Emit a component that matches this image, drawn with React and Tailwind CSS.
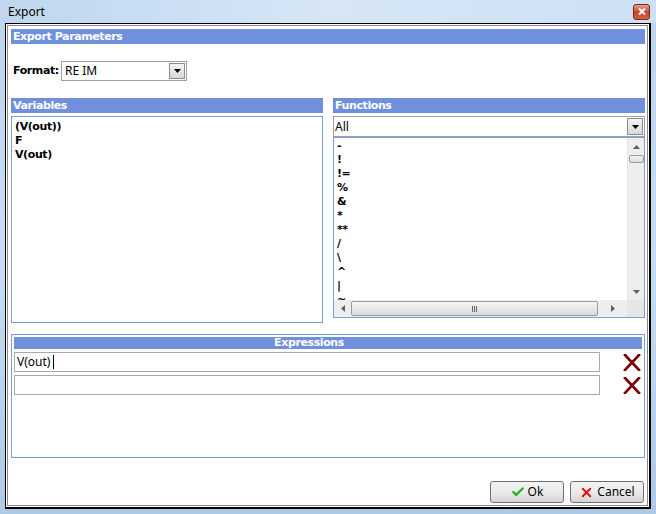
import { Check, X } from 'lucide-react'

const BOLD = "font-['DejaVu_Sans',sans-serif] font-bold text-[11px] tracking-[-0.4px]"
const REG = "font-['Noto_Sans',sans-serif] text-[12px]"

const FUNCTIONS = ['-', '!', '!=', '%', '&', '*', '**', '/', '\\', '^', '|', '~']

function Header({ children, className = '' }) {
  return (
    <div className={`h-[15px] bg-[#7090de] text-white leading-[15px] pl-[2px] ${BOLD} ${className}`}>
      {children}
    </div>
  )
}

function DropButton({ className = '' }) {
  return (
    <div
      className={`w-[16px] flex items-center justify-center border border-[#8c8c8c] bg-gradient-to-b from-[#f4f4f4] to-[#d8d8d8] ${className}`}
    >
      <svg width="7" height="4" viewBox="0 0 7 4">
        <path d="M0 0h7L3.5 4z" fill="#000" />
      </svg>
    </div>
  )
}

function Arrow({ dir }) {
  const d = {
    up: 'M0 4h7L3.5 0z',
    down: 'M0 0h7L3.5 4z',
    left: 'M4 0v7L0 3.5z',
    right: 'M0 0v7L4 3.5z'
  }[dir]
  const vert = dir === 'up' || dir === 'down'
  return (
    <svg width={vert ? 7 : 4} height={vert ? 4 : 7} viewBox={vert ? '0 0 7 4' : '0 0 4 7'}>
      <path d={d} fill="#606060" />
    </svg>
  )
}

function DeleteIcon() {
  return (
    <svg width="18" height="17" viewBox="0 0 18 17">
      <path d="M2 1L16 16M16 1L2 16" stroke="#7a0000" strokeWidth="2.6" strokeLinecap="square" />
    </svg>
  )
}

function CloseButton() {
  return (
    <div className="w-[17px] h-[16px] rounded-[3px] border border-[#6b2d20] bg-gradient-to-b from-[#e8a090] via-[#c7442c] to-[#d8603c] flex items-center justify-center">
      <svg width="8" height="7" viewBox="0 0 8 7">
        <path d="M1 0.5L7 6.5M7 0.5L1 6.5" stroke="#fff" strokeWidth="2" />
      </svg>
    </div>
  )
}

function WinButton({ icon, label }) {
  return (
    <button className="w-[74px] h-[22px] flex items-center justify-center gap-[3px] rounded-[3px] border border-[#707070] bg-gradient-to-b from-[#f2f2f2] via-[#ebebeb] to-[#d5d5d5] text-[#000]">
      {icon}
      <span className={`${REG} leading-none`}>{label}</span>
    </button>
  )
}

export default function App() {
  return (
    <div className="w-[656px] h-[514px] flex flex-col bg-gradient-to-b from-[#bcd3ec] via-[#c7dcf2] to-[#aec9e6] overflow-hidden">
      <div className="h-[23px] flex items-center justify-between pl-[8px] pr-[6px] bg-gradient-to-r from-[#bfd6ee] via-[#d6e6f7] to-[#cde0f4]">
        <span className={`${REG} text-[#000] leading-none`}>Export</span>
        <CloseButton />
      </div>

      <div className="flex-1 px-[5px] pb-[5px] flex">
        <div className="flex-1 flex border-black border-l border-t border-r-2 border-b-2 bg-white p-[1px]">
          <div className="flex-1 flex flex-col border border-[#8a8a8a] bg-white pt-[3px] pl-[3px] pr-[2px] pb-[2px]">
            <Header>Export Parameters</Header>

            <div className="mt-[17px] flex items-center h-[20px]">
              <span className={`${BOLD} text-black pl-[2px] w-[50px]`}>Format:</span>
              <div className="w-[126px] h-[20px] flex border border-[#a0a0a0] bg-white">
                <span className={`${REG} flex-1 pl-[3px] leading-[18px] text-black`}>RE IM</span>
                <DropButton className="my-[1px] mr-[1px]" />
              </div>
            </div>

            <div className="mt-[17px] flex gap-[10px]">
              <div className="w-[312px] flex flex-col">
                <Header>Variables</Header>
                <div className="mt-[3px] h-[207px] border border-[#7b9ce0] pt-[3px] pl-[3px]">
                  {['(V(out))', 'F', 'V(out)'].map((v) => (
                    <div key={v} className={`${BOLD} h-[14px] leading-[14px] text-black`}>
                      {v}
                    </div>
                  ))}
                </div>
              </div>

              <div className="w-[312px] flex flex-col">
                <Header>Functions</Header>
                <div className="mt-[3px] h-[21px] flex border border-[#a0a0a0] bg-white">
                  <span className={`${REG} flex-1 pl-[1px] leading-[19px] text-black`}>All</span>
                  <DropButton className="my-[1px] mr-[1px]" />
                </div>
                <div className="h-[181px] flex flex-col border border-[#7b9ce0]">
                  <div className="flex-1 flex min-h-0">
                    <div className="flex-1 overflow-hidden pt-[1px] pl-[3px]">
                      {FUNCTIONS.map((f) => (
                        <div key={f} className={`${BOLD} h-[14px] leading-[14px] text-black`}>
                          {f}
                        </div>
                      ))}
                    </div>
                    <div className="w-[17px] bg-[#eeeeee] flex flex-col items-center border-l border-[#e4e4e4]">
                      <div className="h-[17px] flex items-center justify-center">
                        <Arrow dir="up" />
                      </div>
                      <div className="w-[15px] h-[8px] rounded-[2px] border border-[#9a9a9a] bg-gradient-to-b from-[#f4f4f4] to-[#dcdcdc]" />
                      <div className="flex-1" />
                      <div className="h-[17px] flex items-center justify-center">
                        <Arrow dir="down" />
                      </div>
                    </div>
                  </div>
                  <div className="h-[17px] flex bg-[#eeeeee]">
                    <div className="w-[17px] flex items-center justify-center">
                      <Arrow dir="left" />
                    </div>
                    <div className="w-[247px] my-[1px] rounded-[2px] border border-[#9a9a9a] bg-gradient-to-b from-[#f6f6f6] to-[#dadada] flex items-center justify-center">
                      <svg width="6" height="6" viewBox="0 0 6 6">
                        <path d="M0.5 0v6M2.5 0v6M4.5 0v6" stroke="#666" />
                      </svg>
                    </div>
                    <div className="flex-1 flex items-center justify-center">
                      <Arrow dir="right" />
                    </div>
                    <div className="w-[17px] bg-[#e6e6e6]" />
                  </div>
                </div>
              </div>
            </div>

            <div className="mt-[11px] h-[124px] border border-[#7b9ce0] p-[2px] flex flex-col">
              <div className={`h-[12px] bg-[#7090de] text-white leading-[12px] text-center pr-[38px] ${BOLD}`}>
                Expressions
              </div>
              <div className="mt-[3px] flex flex-col gap-[3px]">
                {['V(out)', ''].map((e, i) => (
                  <div key={i} className="flex items-center">
                    <div className="w-[586px] h-[20px] border border-[#a8a8b0] bg-white flex items-center pl-[2px]">
                      <span className={`${REG} text-black leading-none`}>{e}</span>
                      {i === 0 && <span className="ml-[3px] w-[1px] h-[14px] bg-black" />}
                    </div>
                    <div className="flex-1 flex justify-end pr-[1px]">
                      <DeleteIcon />
                    </div>
                  </div>
                ))}
              </div>
            </div>

            <div className="mt-auto flex justify-end gap-[6px] pr-[1px]">
              <WinButton icon={<Check size={14} strokeWidth={4} className="text-[#22b41c]" />} label="Ok" />
              <WinButton icon={<X size={15} strokeWidth={3} className="text-[#e01010]" />} label="Cancel" />
            </div>
          </div>
        </div>
      </div>
    </div>
  )
}
